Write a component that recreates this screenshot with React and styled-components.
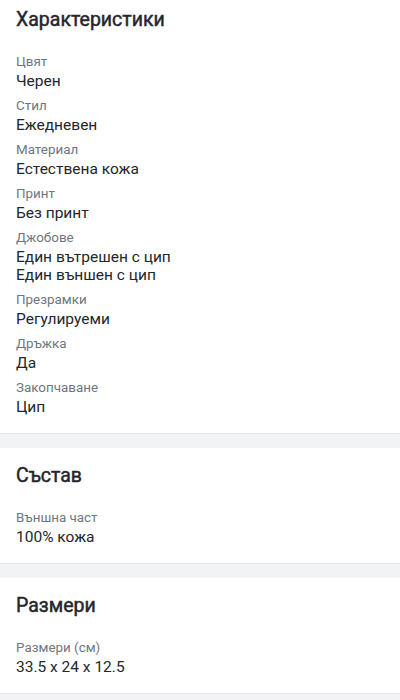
import React from 'react'
import styled, { createGlobalStyle } from 'styled-components'

const GlobalStyle = createGlobalStyle`
  html, body {
    margin: 0;
    padding: 0;
    background: #f2f3f5;
    font-family: Roboto, "Noto Sans", "Liberation Sans", sans-serif;
  }
`;

const Page = styled.div`
  display: flex;
  flex-direction: column;
  width: 400px;
  background: #f2f3f5;
`;

const Section = styled.section`
  background: #ffffff;
  padding: ${({ $top }) => $top}px 16px 17px;
  border-bottom: 1px solid #e4e6ea;
  margin-bottom: 14px;
`;

const Title = styled.h2`
  margin: 0 0 21px;
  font-size: 19.5px;
  line-height: 24px;
  font-weight: 400;
  -webkit-text-stroke: 0.45px #23262b;
  color: #23262b;
`;

const List = styled.div`
  display: flex;
  flex-direction: column;
  gap: 7px;
`;

const Item = styled.div`
  display: flex;
  flex-direction: column;
`;

const Label = styled.div`
  font-size: 13.4px;
  line-height: 18px;
  color: #6e7681;
`;

const Value = styled.div`
  font-size: 15.5px;
  line-height: 18px;
  color: #23262b;
  margin-top: 1px;
`;

const sections = [
  {
    title: 'Характеристики',
    top: 8,
    items: [
      ['Цвят', ['Черен']],
      ['Стил', ['Ежедневен']],
      ['Материал', ['Естествена кожа']],
      ['Принт', ['Без принт']],
      ['Джобове', ['Един вътрешен с цип', 'Един външен с цип']],
      ['Презрамки', ['Регулируеми']],
      ['Дръжка', ['Да']],
      ['Закопчаване', ['Цип']],
    ],
  },
  {
    title: 'Състав',
    top: 16,
    items: [['Външна част', ['100% кожа']]],
  },
  {
    title: 'Размери',
    top: 16,
    items: [['Размери (см)', ['33.5 x 24 x 12.5']]],
  },
]

const App = () => {
  return (
    <Page>
      <GlobalStyle />
      {sections.map((s) => (
        <Section key={s.title} $top={s.top}>
          <Title>{s.title}</Title>
          <List>
            {s.items.map(([label, values]) => (
              <Item key={label}>
                <Label>{label}</Label>
                <Value>
                  {values.map((v) => (
                    <div key={v}>{v}</div>
                  ))}
                </Value>
              </Item>
            ))}
          </List>
        </Section>
      ))}
    </Page>
  )
}

export default App
